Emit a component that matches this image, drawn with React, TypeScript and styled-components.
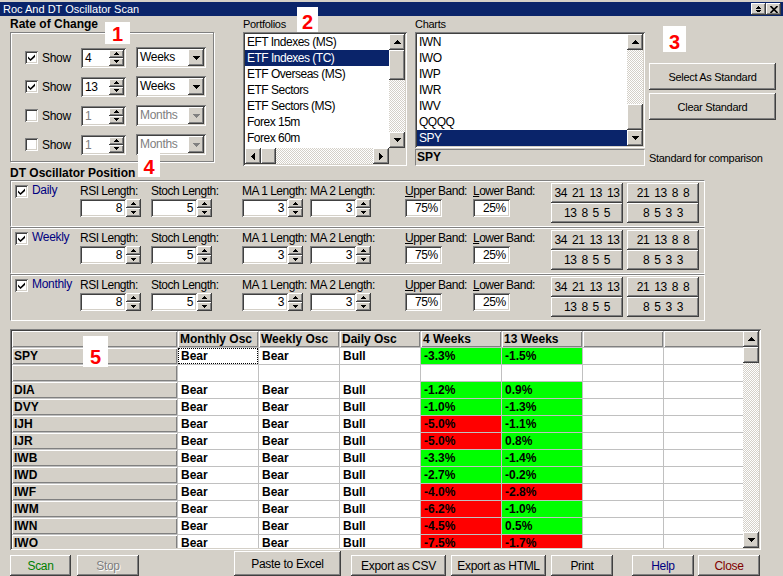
import React from 'react';
import styled, { createGlobalStyle, css } from 'styled-components';

const GlobalStyle = createGlobalStyle`
  body {
    margin: 0;
    background: #d4d0c8;
    font-family: "Liberation Sans", Arial, sans-serif;
  }
  * { box-sizing: border-box; }
`;

const raised = css`
  background: #d4d0c8;
  box-shadow: inset -1px -1px #404040, inset 1px 1px #fff, inset -2px -2px #808080, inset 2px 2px #d4d0c8;
`;

const sunken = css`
  box-shadow: inset 1px 1px #808080, inset -1px -1px #fff, inset 2px 2px #404040, inset -2px -2px #d4d0c8;
`;

type Dir = 'up' | 'down' | 'left' | 'right';

const triPoints: Record<Dir, string> = {
  up: '3.5,0 7,4 0,4',
  down: '0,0 7,0 3.5,4',
  left: '4,0 4,7 0,3.5',
  right: '0,0 0,7 4,3.5',
};

const Tri = ({ dir, color = '#000', small }: { dir: Dir; color?: string; small?: boolean }) => {
  const vertical = dir === 'up' || dir === 'down';
  const scale = small ? 0.72 : 1;
  const w = (vertical ? 7 : 4) * scale;
  const h = (vertical ? 4 : 7) * scale;
  return (
    <svg width={w} height={h} viewBox={vertical ? '0 0 7 4' : '0 0 4 7'} shapeRendering="crispEdges">
      <polygon points={triPoints[dir]} fill={color} />
    </svg>
  );
};

const Window = styled.div`
  position: relative;
  width: 783px;
  height: 576px;
  overflow: hidden;
  background: #d4d0c8;
  font-family: "Liberation Sans", Arial, sans-serif;
  font-size: 11px;
  letter-spacing: -0.3px;
  color: #000;
  display: flex;
  flex-direction: column;
`;

const TitleBar = styled.div`
  flex: none;
  margin-top: 2px;
  height: 14px;
  background: #0a246a;
  color: #fff;
  display: flex;
  align-items: center;
  padding: 0 2px 0 3px;
  letter-spacing: 0;
`;

const TitleText = styled.div`
  flex: 1;
  font-size: 11px;
  line-height: 14px;
`;

const CaptionBtn = styled.div`
  ${raised};
  width: 15px;
  height: 12px;
  display: flex;
  flex-direction: column;
  align-items: center;
  justify-content: center;
  gap: 1px;
`;

const TopSection = styled.div`
  flex: none;
  display: flex;
  height: 150px;
  padding-left: 10px;
`;

const RocColumn = styled.div`
  width: 204px;
  display: flex;
  flex-direction: column;
`;

const BoldLabel = styled.div`
  font-weight: bold;
  font-size: 12px;
  letter-spacing: 0;
  height: 16px;
  line-height: 16px;
`;

const PlainLabel = styled.div`
  height: 16px;
  line-height: 16px;
`;

const GroupBox = styled.div`
  height: 130px;
  border: 1px solid #808080;
  box-shadow: inset 1px 1px #fff, 1px 1px #fff;
  padding: 14px 0 0 14px;
  display: flex;
  flex-direction: column;
  gap: 8px;
`;

const RocRow = styled.div`
  height: 21px;
  display: flex;
  align-items: center;
`;

const CheckBox = styled.div`
  ${sunken};
  background: #fff;
  width: 13px;
  height: 13px;
  flex: none;
  display: flex;
  align-items: center;
  justify-content: center;
`;

const ShowText = styled.div`
  width: 43px;
  padding-left: 4px;
  font-size: 12px;
`;

const SpinBox = styled.div`
  ${sunken};
  background: #fff;
  width: 45px;
  height: 20px;
  padding: 2px;
  display: flex;
`;

const SpinText = styled.div<{ $disabled?: boolean }>`
  flex: 1;
  padding-left: 2px;
  line-height: 16px;
  font-size: 12px;
  color: ${p => (p.$disabled ? '#808080' : '#000')};
`;

const SpinBtns = styled.div`
  width: 15px;
  display: flex;
  flex-direction: column;
`;

const MiniBtn = styled.div`
  ${raised};
  flex: 1;
  display: flex;
  align-items: center;
  justify-content: center;
`;

const Combo = styled.div`
  ${sunken};
  background: #fff;
  width: 70px;
  height: 21px;
  margin-left: 10px;
  padding: 2px;
  display: flex;
`;

const ComboText = styled.div<{ $disabled?: boolean }>`
  flex: 1;
  padding-left: 2px;
  line-height: 17px;
  font-size: 12px;
  color: ${p => (p.$disabled ? '#808080' : '#000')};
`;

const ComboBtn = styled.div`
  ${raised};
  width: 16px;
  display: flex;
  align-items: center;
  justify-content: center;
`;

const ListColumn = styled.div<{ $w: number; $ml: number }>`
  width: ${p => p.$w}px;
  margin-left: ${p => p.$ml}px;
  display: flex;
  flex-direction: column;
`;

const ListBox = styled.div<{ $h: number; $hscroll?: boolean }>`
  ${sunken};
  background: #fff;
  height: ${p => p.$h}px;
  padding: 2px;
  display: grid;
  grid-template-columns: 1fr 16px;
  grid-template-rows: ${p => (p.$hscroll ? '1fr 16px' : '1fr')};
`;

const Items = styled.div`
  overflow: hidden;
`;

const Item = styled.div<{ $sel?: boolean }>`
  height: 16px;
  line-height: 16px;
  padding-left: 2px;
  font-size: 12px;
  letter-spacing: -0.5px;
  white-space: nowrap;
  background: ${p => (p.$sel ? '#0a246a' : 'transparent')};
  color: ${p => (p.$sel ? '#fff' : '#000')};
`;

const ScrollV = styled.div`
  display: flex;
  flex-direction: column;
`;

const ScrollH = styled.div`
  display: flex;
`;

const ScrollBtn = styled.div`
  ${raised};
  width: 16px;
  height: 16px;
  flex: none;
  display: flex;
  align-items: center;
  justify-content: center;
`;

const Track = styled.div<{ $vertical?: boolean }>`
  flex: 1;
  display: flex;
  flex-direction: ${p => (p.$vertical ? 'column' : 'row')};
  background-color: #fff;
  background-image: repeating-conic-gradient(#d4d0c8 0 25%, #fff 0 50%);
  background-size: 2px 2px;
`;

const Thumb = styled.div<{ $at: number; $size: number; $vertical?: boolean }>`
  ${raised};
  flex: none;
  ${p =>
    p.$vertical
      ? css`margin-top: ${p.$at}px; height: ${p.$size}px;`
      : css`margin-left: ${p.$at}px; width: ${p.$size}px;`}
`;

const Corner = styled.div`
  background: #d4d0c8;
`;

const VScrollBar = ({ at, size }: { at: number; size: number }) => (
  <ScrollV>
    <ScrollBtn><Tri dir="up" /></ScrollBtn>
    <Track $vertical>
      <Thumb $vertical $at={at} $size={size} />
    </Track>
    <ScrollBtn><Tri dir="down" /></ScrollBtn>
  </ScrollV>
);

const HScrollBar = ({ at, size }: { at: number; size: number }) => (
  <ScrollH>
    <ScrollBtn><Tri dir="left" /></ScrollBtn>
    <Track>
      <Thumb $at={at} $size={size} />
    </Track>
    <ScrollBtn><Tri dir="right" /></ScrollBtn>
  </ScrollH>
);

const StaticBox = styled.div`
  margin-top: 1px;
  height: 17px;
  border: 1px solid;
  border-color: #808080 #fff #fff #808080;
  font-weight: bold;
  font-size: 12px;
  letter-spacing: 0;
  line-height: 15px;
  padding-left: 1px;
`;

const RightColumn = styled.div`
  width: 128px;
  margin-left: 4px;
  padding-top: 47px;
  display: flex;
  flex-direction: column;
  gap: 3px;
`;

const StdButton = styled.div`
  ${raised};
  height: 27px;
  width: 127px;
  display: flex;
  align-items: center;
  justify-content: center;
  font-size: 11px;
`;

const StdNote = styled.div`
  margin-top: auto;
  height: 16px;
  line-height: 16px;
`;

const DtLabel = styled(BoldLabel)`
  flex: none;
  height: 14px;
  line-height: 14px;
  padding-left: 10px;
`;

const OscPanel = styled.div`
  flex: none;
  margin-left: 10px;
  width: 695px;
  display: flex;
  flex-direction: column;
`;

const OscRow = styled.div`
  height: 47px;
  display: flex;
  align-items: flex-start;
  padding: 4px 0 0 4px;
  border: 1px solid;
  border-color: #808080 #fff #fff #808080;
  box-shadow: inset 1px 1px #fff;
`;

const OscName = styled.div`
  width: 48px;
  margin-left: 4px;
  margin-top: -2px;
  font-size: 12px;
  color: #000080;
`;

const Field = styled.div<{ $w: number }>`
  width: ${p => p.$w}px;
  display: flex;
  flex-direction: column;
`;

const FieldLabel = styled.div`
  height: 14px;
  line-height: 12px;
  font-size: 12px;
  letter-spacing: -0.5px;
  white-space: nowrap;
`;

const FieldControls = styled.div`
  display: flex;
`;

const NumEdit = styled.div<{ $w: number }>`
  ${sunken};
  background: #fff;
  width: ${p => p.$w}px;
  height: 18px;
  text-align: right;
  padding-right: 4px;
  font-size: 12px;
  line-height: 18px;
`;

const UpDown = styled.div`
  width: 15px;
  height: 18px;
  display: flex;
  flex-direction: column;
`;

const PresetGrid = styled.div`
  margin-top: -2px;
  display: grid;
  grid-template-columns: 72px 72px;
  grid-template-rows: 20px 20px;
  column-gap: 4px;
`;

const PresetBtn = styled.div`
  ${raised};
  display: flex;
  align-items: center;
  justify-content: center;
  font-size: 12px;
  letter-spacing: -0.4px;
  word-spacing: 2px;
`;

const GridFrame = styled.div`
  flex: none;
  margin: 8px 0 0 10px;
  width: 751px;
  height: 221px;
  ${sunken};
  background: #fff;
  padding: 2px;
  display: flex;
`;

const Table = styled.div`
  flex: 1;
  overflow: hidden;
  display: grid;
  grid-template-columns: 165px repeat(7, 80px);
  grid-auto-rows: 16px;
  gap: 1px;
  background: #c0c0c0;
  align-content: start;
`;

const FixedCell = styled.div`
  background: #d4d0c8;
  box-shadow: inset 1px 1px #fff, inset -1px -1px #808080;
  font-weight: bold;
  font-size: 12px;
  letter-spacing: 0;
  line-height: 16px;
  padding-left: 2px;
  white-space: nowrap;
`;

const DataCell = styled.div<{ $bg?: string; $focus?: boolean }>`
  background: ${p => p.$bg || '#fff'};
  font-weight: bold;
  font-size: 12px;
  letter-spacing: 0;
  line-height: 16px;
  padding-left: 3px;
  white-space: nowrap;
  ${p => p.$focus && css`outline: 1px dotted #000; outline-offset: -1px;`}
`;

const GridScroll = styled.div`
  width: 16px;
  display: flex;
`;

const BottomBar = styled.div`
  flex: none;
  display: flex;
  align-items: flex-end;
  height: 26px;
`;

const ActionBtn = styled.div<{ $w: number; $ml: number; $color?: string; $disabled?: boolean; $h?: number }>`
  ${raised};
  width: ${p => p.$w}px;
  height: ${p => p.$h || 21}px;
  margin-left: ${p => p.$ml}px;
  display: flex;
  align-items: center;
  justify-content: center;
  font-size: 12px;
  letter-spacing: -0.3px;
  color: ${p => (p.$disabled ? '#808080' : p.$color || '#000')};
  ${p => p.$disabled && css`text-shadow: 1px 1px #fff;`}
`;

const Badge = styled.div<{ $x: number; $y: number; $w: number; $h: number }>`
  position: absolute;
  left: ${p => p.$x}px;
  top: ${p => p.$y}px;
  width: ${p => p.$w}px;
  height: ${p => p.$h}px;
  background: #fff;
  color: #ff0000;
  font-weight: bold;
  font-size: 20px;
  letter-spacing: 0;
  line-height: 18px;
  display: flex;
  align-items: flex-end;
  justify-content: center;
  padding-bottom: 1px;
  z-index: 5;
`;

const Check = () => (
  <svg width="7" height="7" viewBox="0 0 7 7">
    <path d="M0 2.5 L2.5 5 L7 0.5 L7 3 L2.5 7 L0 4.5 Z" fill="#000" />
  </svg>
);

const rocRows = [
  { on: true, val: '4', unit: 'Weeks' },
  { on: true, val: '13', unit: 'Weeks' },
  { on: false, val: '1', unit: 'Months' },
  { on: false, val: '1', unit: 'Months' },
];

const portfolios = ['EFT Indexes (MS)', 'ETF Indexes (TC)', 'ETF Overseas (MS)', 'ETF Sectors', 'ETF Sectors (MS)', 'Forex 15m', 'Forex 60m'];
const charts = ['IWN', 'IWO', 'IWP', 'IWR', 'IWV', 'QQQQ', 'SPY'];

const oscRows = ['Daily', 'Weekly', 'Monthly'];

const spinFields = [
  { label: 'RSI Length:', w: 71, val: '8' },
  { label: 'Stoch Length:', w: 91, val: '5' },
  { label: 'MA 1 Length:', w: 68, val: '3' },
  { label: 'MA 2 Length:', w: 95, val: '3' },
];

const GREEN = '#00ff00';
const RED = '#ff0000';

const symbols: [string, string, string][] = [
  ['DIA', '-1.2%', '0.9%'],
  ['DVY', '-1.0%', '-1.3%'],
  ['IJH', '-5.0%', '-1.1%'],
  ['IJR', '-5.0%', '0.8%'],
  ['IWB', '-3.3%', '-1.4%'],
  ['IWD', '-2.7%', '-0.2%'],
  ['IWF', '-4.0%', '-2.8%'],
  ['IWM', '-6.2%', '-1.0%'],
  ['IWN', '-4.5%', '0.5%'],
  ['IWO', '-7.5%', '-1.7%'],
];

// red when the symbol does worse than the standard (SPY)
const rocColor = (v: string, std: number) => (parseFloat(v) < std ? RED : GREEN);

const headers = ['Monthly Osc', 'Weekly Osc', 'Daily Osc', '4 Weeks', '13 Weeks', '', ''];

const actions = [
  { label: 'Scan', w: 61, ml: 10, color: '#008000' },
  { label: 'Stop', w: 62, ml: 6, disabled: true },
  { label: 'Paste to Excel', w: 107, ml: 95, h: 25 },
  { label: 'Export as CSV', w: 95, ml: 10 },
  { label: 'Export as HTML', w: 95, ml: 5 },
  { label: 'Print', w: 62, ml: 5 },
  { label: 'Help', w: 62, ml: 19, color: '#000080' },
  { label: 'Close', w: 62, ml: 4, color: '#800000' },
];

type Cell = { text: string; bg?: string; focus?: boolean };

const GridRow = ({ name, cells }: { name: string; cells: Cell[] }) => (
  <>
    <FixedCell>{name}</FixedCell>
    {cells.map((c, i) => (
      <DataCell key={i} $bg={c.bg} $focus={c.focus}>{c.text}</DataCell>
    ))}
  </>
);

const pad = (cells: Cell[]) => [...cells, { text: '' }, { text: '' }];

export default function App() {
  return (
    <Window>
      <GlobalStyle />
      <TitleBar>
        <TitleText>Roc And DT Oscillator Scan</TitleText>
        <CaptionBtn>
          <Tri dir="up" small />
          <Tri dir="down" small />
        </CaptionBtn>
        <CaptionBtn>
          <svg width="8" height="7" viewBox="0 0 8 7">
            <path d="M0.5 0 L7.5 7 M7.5 0 L0.5 7" stroke="#000" strokeWidth="1.6" />
          </svg>
        </CaptionBtn>
      </TitleBar>

      <TopSection>
        <RocColumn>
          <BoldLabel>Rate of Change</BoldLabel>
          <GroupBox>
            {rocRows.map((r, i) => (
              <RocRow key={i}>
                <CheckBox>{r.on && <Check />}</CheckBox>
                <ShowText>Show</ShowText>
                <SpinBox>
                  <SpinText $disabled={!r.on}>{r.val}</SpinText>
                  <SpinBtns>
                    <MiniBtn><Tri dir="up" small /></MiniBtn>
                    <MiniBtn><Tri dir="down" small /></MiniBtn>
                  </SpinBtns>
                </SpinBox>
                <Combo>
                  <ComboText $disabled={!r.on}>{r.unit}</ComboText>
                  <ComboBtn><Tri dir="down" color={r.on ? '#000' : '#808080'} /></ComboBtn>
                </Combo>
              </RocRow>
            ))}
          </GroupBox>
        </RocColumn>

        <ListColumn $w={164} $ml={29}>
          <PlainLabel>Portfolios</PlainLabel>
          <ListBox $h={134} $hscroll>
            <Items>
              {portfolios.map(p => (
                <Item key={p} $sel={p === 'ETF Indexes (TC)'}>{p}</Item>
              ))}
            </Items>
            <VScrollBar at={0} size={30} />
            <HScrollBar at={0} size={15} />
            <Corner />
          </ListBox>
        </ListColumn>

        <ListColumn $w={230} $ml={8}>
          <PlainLabel>Charts</PlainLabel>
          <ListBox $h={116}>
            <Items>
              {charts.map(c => (
                <Item key={c} $sel={c === 'SPY'}>{c}</Item>
              ))}
            </Items>
            <VScrollBar at={54} size={26} />
          </ListBox>
          <StaticBox>SPY</StaticBox>
        </ListColumn>

        <RightColumn>
          <StdButton>Select As Standard</StdButton>
          <StdButton>Clear Standard</StdButton>
          <StdNote>Standard for comparison</StdNote>
        </RightColumn>
      </TopSection>

      <DtLabel>DT Oscillator Position</DtLabel>
      <OscPanel>
        {oscRows.map(name => (
          <OscRow key={name}>
            <CheckBox><Check /></CheckBox>
            <OscName>{name}</OscName>
            {spinFields.map(f => (
              <Field key={f.label} $w={f.w}>
                <FieldLabel>{f.label}</FieldLabel>
                <FieldControls>
                  <NumEdit $w={46}>{f.val}</NumEdit>
                  <UpDown>
                    <MiniBtn><Tri dir="up" small /></MiniBtn>
                    <MiniBtn><Tri dir="down" small /></MiniBtn>
                  </UpDown>
                </FieldControls>
              </Field>
            ))}
            <Field $w={68}>
              <FieldLabel><u>U</u>pper Band:</FieldLabel>
              <NumEdit $w={37}>75%</NumEdit>
            </Field>
            <Field $w={78}>
              <FieldLabel><u>L</u>ower Band:</FieldLabel>
              <NumEdit $w={37}>25%</NumEdit>
            </Field>
            <PresetGrid>
              <PresetBtn>34 21 13 13</PresetBtn>
              <PresetBtn>21 13 8 8</PresetBtn>
              <PresetBtn>13 8 5 5</PresetBtn>
              <PresetBtn>8 5 3 3</PresetBtn>
            </PresetGrid>
          </OscRow>
        ))}
      </OscPanel>

      <GridFrame>
        <Table>
          <FixedCell />
          {headers.map((h, i) => (
            <FixedCell key={i}>{h}</FixedCell>
          ))}
          <GridRow
            name="SPY"
            cells={pad([
              { text: 'Bear', focus: true },
              { text: 'Bear' },
              { text: 'Bull' },
              { text: '-3.3%', bg: GREEN },
              { text: '-1.5%', bg: GREEN },
            ])}
          />
          <GridRow name="" cells={pad([{ text: '' }, { text: '' }, { text: '' }, { text: '' }, { text: '' }])} />
          {symbols.map(([sym, w4, w13]) => (
            <GridRow
              key={sym}
              name={sym}
              cells={pad([
                { text: 'Bear' },
                { text: 'Bear' },
                { text: 'Bull' },
                { text: w4, bg: rocColor(w4, -3.3) },
                { text: w13, bg: rocColor(w13, -1.5) },
              ])}
            />
          ))}
        </Table>
        <GridScroll>
          <VScrollBar at={0} size={16} />
        </GridScroll>
      </GridFrame>

      <BottomBar>
        {actions.map(a => (
          <ActionBtn key={a.label} $w={a.w} $ml={a.ml} $h={a.h} $color={a.color} $disabled={a.disabled}>
            {a.label}
          </ActionBtn>
        ))}
      </BottomBar>

      <Badge $x={105} $y={22} $w={25} $h={22}>1</Badge>
      <Badge $x={297} $y={7} $w={21} $h={25}>2</Badge>
      <Badge $x={663} $y={26} $w={23} $h={26}>3</Badge>
      <Badge $x={138} $y={152} $w={22} $h={25}>4</Badge>
      <Badge $x={83} $y={336} $w={25} $h={31}>5</Badge>
    </Window>
  );
}
